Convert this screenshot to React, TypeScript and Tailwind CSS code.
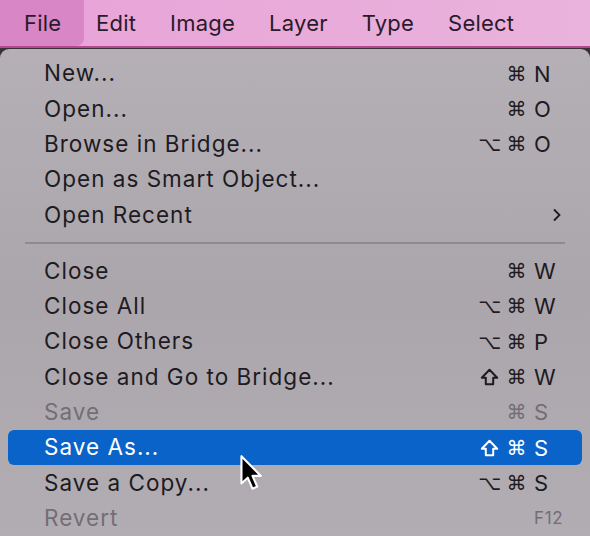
import React from 'react';

type Item = {
    label: string;
    mods?: string[];
    keyLabel?: string;
    disabled?: boolean;
    active?: boolean;
    submenu?: boolean;
    small?: boolean;
};

const groupA: Item[] = [
    { label: 'New...', mods: ['⌘'], keyLabel: 'N' },
    { label: 'Open...', mods: ['⌘'], keyLabel: 'O' },
    { label: 'Browse in Bridge...', mods: ['⌥', '⌘'], keyLabel: 'O' },
    { label: 'Open as Smart Object...' },
    { label: 'Open Recent', submenu: true },
];

const groupB: Item[] = [
    { label: 'Close', mods: ['⌘'], keyLabel: 'W' },
    { label: 'Close All', mods: ['⌥', '⌘'], keyLabel: 'W' },
    { label: 'Close Others', mods: ['⌥', '⌘'], keyLabel: 'P' },
    { label: 'Close and Go to Bridge...', mods: ['⇧', '⌘'], keyLabel: 'W' },
    { label: 'Save', mods: ['⌘'], keyLabel: 'S', disabled: true },
    { label: 'Save As...', mods: ['⇧', '⌘'], keyLabel: 'S', active: true },
    { label: 'Save a Copy...', mods: ['⌥', '⌘'], keyLabel: 'S' },
    { label: 'Revert', keyLabel: 'F12', disabled: true, small: true },
];

const menuNames = ['Edit', 'Image', 'Layer', 'Type', 'Select'];

// shift key glyph, drawn so it has the heavier outline of the mac one
const ShiftGlyph = () => (
    <svg width="19" height="18" viewBox="0 0 19 18">
        <path
            d="M9.5 1.8 L17.2 9.8 L13.2 9.8 L13.2 16.2 L5.8 16.2 L5.8 9.8 L1.8 9.8 Z"
            fill="none"
            stroke="currentColor"
            strokeWidth="2"
            strokeLinejoin="round"
        />
    </svg>
);

const Row = ({ item }: { item: Item }) => {
    const color = item.active ? 'text-white' : item.disabled ? 'text-[#736e75]' : 'text-[#1d1b1f]';
    return (
        <div
            className={`h-[35.3px] mx-[8px] pl-[36px] pr-[26px] flex items-center rounded-[6px] ${
                item.active ? 'bg-[#0a63c9]' : ''
            } ${color}`}
        >
            <span className="flex-1 text-[22.5px] leading-none tracking-[0.045em]">{item.label}</span>
            {item.submenu ? (
                <svg width="10" height="14" viewBox="0 0 10 14" className="mr-[-6px]">
                    <path d="M2 1.5 L7.5 7 L2 12.5" fill="none" stroke="currentColor" strokeWidth="1.8" />
                </svg>
            ) : (
                <div className="flex items-center">
                    <span className="flex items-center gap-[8px] text-[20px] leading-none font-['DejaVu_Sans',sans-serif]">
                        {item.mods?.map((m, i) => (
                            <span key={i} className="w-[19px] flex justify-center">
                                {m === '⇧' ? <ShiftGlyph /> : m}
                            </span>
                        ))}
                    </span>
                    {item.keyLabel && (
                        <span
                            className={`w-[22px] ml-[8px] leading-none whitespace-nowrap ${
                                item.small ? 'text-[17px] tracking-[0.04em]' : 'text-[22px]'
                            }`}
                        >
                            {item.keyLabel}
                        </span>
                    )}
                </div>
            )}
        </div>
    );
};

const Cursor = () => (
    <svg className="absolute left-[236px] top-[453px]" width="34" height="42" viewBox="0 0 32 40">
        <path
            d="M5 3 L5 29 L11 23.5 L15.5 34 L20 32 L15.5 21.8 L23.5 21.8 Z"
            fill="#000"
            stroke="#fff"
            strokeWidth="2"
            strokeLinejoin="round"
        />
    </svg>
);

export default function App() {
    return (
        <div className="w-[590px] h-[536px] overflow-hidden relative bg-[#3a3038] font-['Inter',sans-serif]">
            <div className="h-[46px] flex items-center bg-gradient-to-r from-[#e8a2d8] via-[#e9abda] to-[#e9b3dd] text-[#2b1a29] text-[22px] tracking-[0.01em]">
                <div className="w-[84px] h-full pl-[24px] flex items-center bg-[#d886c6] rounded-br-[8px]">File</div>
                <div className="flex gap-[34px] ml-[12px]">
                    {menuNames.map((n) => (
                        <span key={n}>{n}</span>
                    ))}
                </div>
            </div>
            <div className="h-[2px] bg-[#b5488f]" />
            <div className="h-[488px] mt-[1px] rounded-t-[9px] bg-gradient-to-b from-[#b5b0b6] via-[#aba6ac] to-[#b2adb3] pt-[7px]">
                {groupA.map((it) => (
                    <Row key={it.label} item={it} />
                ))}
                <div className="h-[21px] flex items-center px-[25px]">
                    <div className="h-[2px] w-[541px] bg-[#8f8a91]" />
                </div>
                {groupB.map((it) => (
                    <Row key={it.label} item={it} />
                ))}
            </div>
            <Cursor />
        </div>
    );
}
